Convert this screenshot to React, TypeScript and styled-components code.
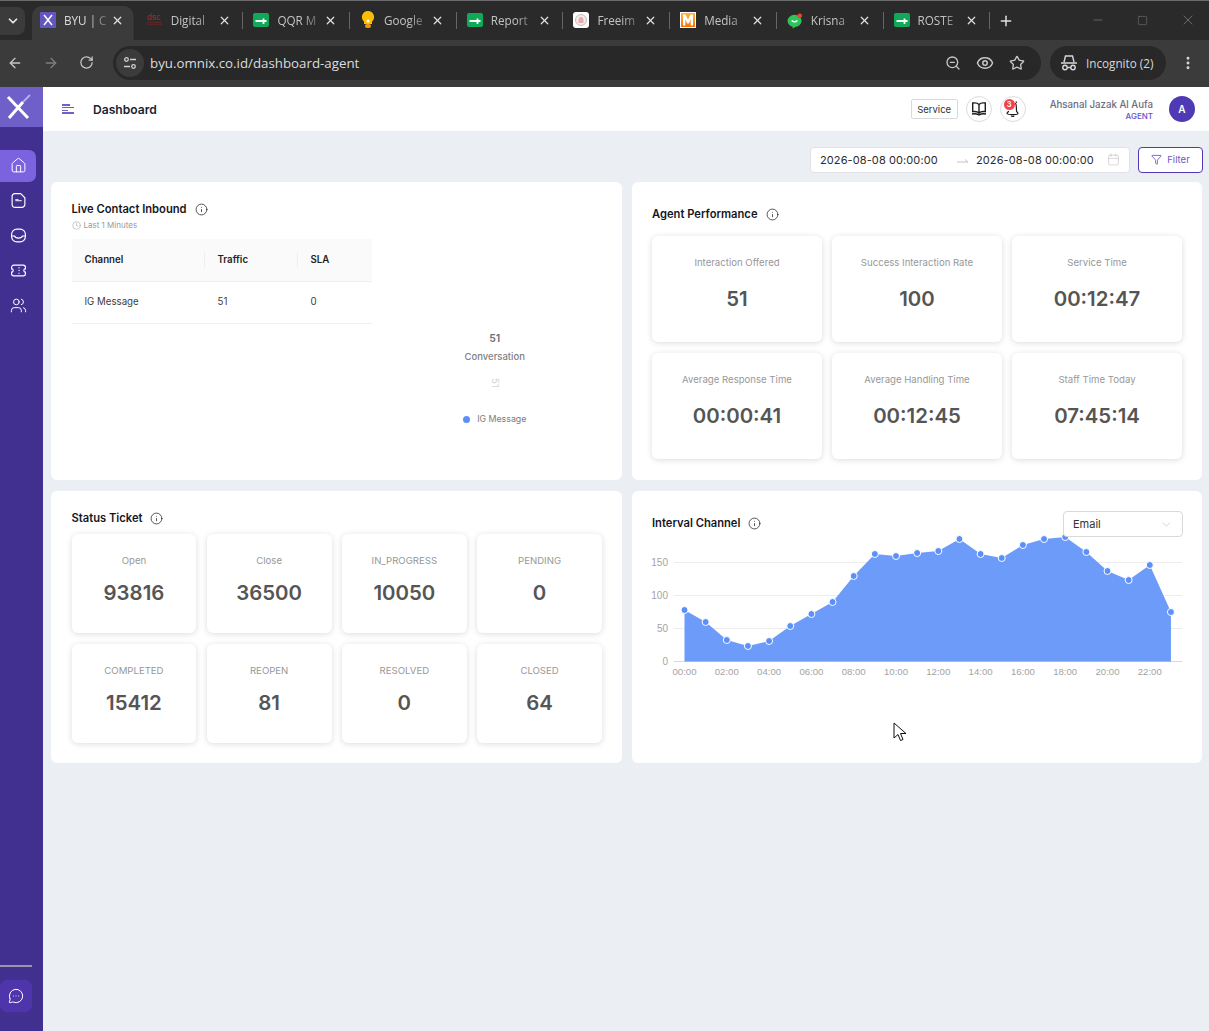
import React from "react";
import styled, { createGlobalStyle } from "styled-components";
import {
  ArrowLeft,
  ArrowRight,
  Calendar,
  ChevronDown,
  Clock,
  EllipsisVertical,
  Eye,
  Funnel,
  House,
  Info,
  MessageCircleMore,
  Minus,
  Plus,
  RotateCw,
  Square,
  Star,
  Users,
  X,
  ZoomOut,
} from "lucide-react";

const GlobalStyle = createGlobalStyle`
  html, body {
    margin: 0;
    padding: 0;
    height: 1031px;
    overflow: hidden;
    background: #ebeef3;
    font-family: "Inter", "Liberation Sans", sans-serif;
  }
  * { box-sizing: border-box; }
`;

const Page = styled.div`
  display: flex;
  flex-direction: column;
  width: 1209px;
  height: 1031px;
`;

/* browser chrome */
const TabStrip = styled.div`
  display: flex;
  align-items: flex-end;
  height: 40px;
  background: #2a2a2a;
  border-top: 1px solid #6b6b6b;
  color: #c9c9c9;
  font-family: "Open Sans", "Noto Sans", sans-serif;
  font-size: 11.7px;
`;

const TabListButton = styled.div`
  display: flex;
  align-items: center;
  justify-content: center;
  width: 25px;
  height: 28px;
  margin: 0 5px 5px 0;
  background: #3b3b3b;
  border-radius: 0 8px 8px 0;
  color: #e8e8e8;
`;

const Tab = styled.div<{ $active?: boolean }>`
  display: flex;
  align-items: center;
  width: 106.7px;
  height: 34px;
  padding: 0 0 6px 10px;
  position: relative;
  color: ${(p) => (p.$active ? "#dedede" : "#c4c4c4")};
  background: ${(p) => (p.$active ? "#3b3b3b" : "transparent")};
  border-radius: 10px 10px 0 0;
  clip-path: ${(p) => (p.$active ? "inset(0 3px 0 2px round 10px 10px 0 0)" : "none")};

  &::after {
    content: "";
    display: ${(p) => (p.$active ? "none" : "block")};
    position: absolute;
    right: 0;
    top: 6px;
    height: 17px;
    width: 1px;
    background: #666;
  }
`;

const TabIconSlot = styled.div`
  display: flex;
  align-items: center;
  justify-content: center;
  width: 16px;
  height: 16px;
  margin-right: 8px;
  flex: none;
`;

const TabTitle = styled.div`
  width: 45px;
  white-space: nowrap;
  flex: none;
  -webkit-mask-image: linear-gradient(90deg, #000 55%, rgba(0, 0, 0, 0.15) 100%);
  mask-image: linear-gradient(90deg, #000 55%, rgba(0, 0, 0, 0.15) 100%);
`;

const TabClose = styled.div`
  display: flex;
  margin-left: 2px;
  color: #e0e0e0;
`;

const NewTab = styled.div`
  display: flex;
  align-items: center;
  margin: 0 0 5px 8px;
  height: 28px;
  color: #e0e0e0;
`;

const WindowControls = styled.div`
  display: flex;
  align-items: center;
  gap: 32px;
  margin-left: auto;
  height: 38px;
  padding: 0 13px 0 0;
  margin-bottom: 1px;
  color: #8a8a8a;
`;

const Toolbar = styled.div`
  display: flex;
  align-items: center;
  height: 47px;
  background: #3b3b3b;
  padding: 0 13px 1px 7px;
  color: #c7c7c7;
`;

const NavButtons = styled.div`
  display: flex;
  gap: 20px;
  width: 106px;
`;

const NavButton = styled.div<{ $muted?: boolean }>`
  display: flex;
  color: ${(p) => (p.$muted ? "#7d7d7d" : "#c7c7c7")};
`;

const AddressPill = styled.div`
  display: flex;
  align-items: center;
  width: 928px;
  height: 34px;
  background: #282828;
  border-radius: 17px;
  padding: 0 16px 0 3px;
`;

const SiteInfo = styled.div`
  display: flex;
  align-items: center;
  justify-content: center;
  width: 28px;
  height: 28px;
  border-radius: 50%;
  background: #3b3b3b;
  margin-right: 6px;
  color: #d0d0d0;
`;

const Url = styled.div`
  font-family: "Open Sans", "Noto Sans", sans-serif;
  font-size: 13.3px;
  color: #dcdcdc;
`;

const AddressActions = styled.div`
  display: flex;
  align-items: center;
  gap: 15px;
  margin-left: auto;
`;

const IncognitoPill = styled.div`
  display: flex;
  align-items: center;
  gap: 8px;
  margin-left: 9px;
  width: 116px;
  height: 34px;
  padding-left: 10px;
  background: #282828;
  border-radius: 17px;
  color: #d8d8d8;
  font-family: "Open Sans", "Noto Sans", sans-serif;
  font-size: 11.7px;
`;

const MoreButton = styled.div`
  display: flex;
  margin-left: auto;
  color: #d8d8d8;
`;

/* app shell */
const AppBody = styled.div`
  display: flex;
  flex: 1;
  min-height: 0;
`;

const Sidebar = styled.aside`
  display: flex;
  flex-direction: column;
  width: 43px;
  flex: none;
  background: #41308f;
`;

const LogoBox = styled.div`
  display: flex;
  align-items: center;
  height: 40px;
  padding-left: 6px;
  background: #6f5fc8;
`;

const SideNav = styled.nav`
  display: flex;
  flex-direction: column;
  gap: 3px;
  margin-top: 23px;
`;

const SideItem = styled.div<{ $active?: boolean }>`
  display: flex;
  align-items: center;
  justify-content: center;
  width: 36px;
  height: 32px;
  padding-bottom: 1px;
  color: #fff;
  background: ${(p) => (p.$active ? "#7b63e0" : "transparent")};
  border-radius: 0 7px 7px 0;
`;

const SideFooter = styled.div`
  margin-top: auto;
  padding-bottom: 19px;
`;

const SideRule = styled.div`
  width: 32px;
  height: 2px;
  background: #9a96a8;
  margin-bottom: 13px;
`;

const ChatButton = styled.div`
  display: flex;
  align-items: center;
  justify-content: center;
  width: 32px;
  height: 32px;
  background: #4f35ab;
  border-radius: 7px;
  color: #fff;
`;

const Content = styled.div`
  flex: 1;
  min-width: 0;
`;

const Header = styled.header`
  display: flex;
  align-items: center;
  height: 44px;
  background: #fff;
  padding: 0 14px 0 19px;
`;

const MenuIcon = styled.div`
  display: flex;
  flex-direction: column;
  gap: 1.5px;
  width: 12px;
  margin-right: 19px;
`;

const MenuLine = styled.span<{ $w: number }>`
  display: block;
  height: 1.2px;
  width: ${(p) => p.$w}px;
  background: #6f5fc8;
`;

const PageTitle = styled.h1`
  margin: 0;
  font-size: 12.1px;
  font-weight: 600;
  color: #1e2230;
`;

const HeaderRight = styled.div`
  display: flex;
  align-items: center;
  margin-left: auto;
`;

const ServiceTag = styled.div`
  display: flex;
  align-items: center;
  justify-content: center;
  width: 47px;
  height: 20px;
  border: 1px solid #d9d9d9;
  border-radius: 2px;
  font-size: 9.5px;
  color: #333;
  margin-right: 8px;
`;

const CircleButton = styled.div`
  display: flex;
  align-items: center;
  justify-content: center;
  position: relative;
  width: 26px;
  height: 26px;
  border: 1px solid #dcdcdc;
  border-radius: 50%;
  margin-right: 8px;
  color: #222;
`;

const BellBadge = styled.span`
  position: absolute;
  top: 2px;
  left: 3px;
  width: 11px;
  height: 11px;
  border-radius: 50%;
  background: #f5414f;
  color: #fff;
  font-size: 7.5px;
  font-weight: 600;
  line-height: 11px;
  text-align: center;
`;

const UserInfo = styled.div`
  display: flex;
  flex-direction: column;
  align-items: flex-end;
  margin: 1px 16px 0 16px;
`;

const UserName = styled.div`
  font-size: 9.7px;
  font-weight: 500;
  line-height: 12px;
  color: #6d6b80;
`;

const UserRole = styled.div`
  font-size: 8px;
  font-weight: 500;
  line-height: 10px;
  color: #6a50c8;
`;

const Avatar = styled.div`
  display: flex;
  align-items: center;
  justify-content: center;
  width: 26px;
  height: 26px;
  border-radius: 50%;
  background: #4f39b5;
  color: #fff;
  font-size: 10px;
  font-weight: 600;
`;

const Main = styled.main`
  padding: 16px 6px 0 8px;
`;

const FilterRow = styled.div`
  display: flex;
  justify-content: flex-end;
  gap: 8px;
  margin-bottom: 9px;
`;

const DateRange = styled.div`
  display: flex;
  align-items: center;
  width: 320px;
  height: 26px;
  padding: 0 9px 1px;
  background: #fff;
  border: 1px solid #e0e2e7;
  border-radius: 4px;
  font-size: 11px;
  color: #2b2b2b;
  letter-spacing: 0.1px;
`;

const DateValue = styled.span`
  width: 137px;
`;

const DateArrow = styled.span`
  display: flex;
  width: 19px;
  color: #c6c6c6;
`;

const DateIcon = styled.span`
  display: flex;
  margin-left: auto;
  color: #c4c4c4;
`;

const FilterButton = styled.button`
  display: flex;
  align-items: center;
  justify-content: center;
  gap: 5px;
  width: 65px;
  height: 26px;
  padding: 0 0 1px;
  background: #fff;
  border: 1px solid #4f39b5;
  border-radius: 4px;
  color: #6a58c4;
  font-family: inherit;
  font-size: 9.5px;
`;

const CardGrid = styled.div`
  display: grid;
  grid-template-columns: 571px 570px;
  grid-template-rows: 298px 272px;
  gap: 11px 10px;
`;

const Card = styled.section<{ $pl?: number }>`
  position: relative;
  background: #fff;
  border-radius: 6px;
  padding: 20px 20px 20px ${(p) => p.$pl ?? 20}px;
`;

const TitleRow = styled.div<{ $mb?: number; $mt?: number }>`
  display: flex;
  align-items: center;
  gap: 8px;
  height: 14px;
  margin-top: ${(p) => p.$mt ?? 0}px;
  margin-bottom: ${(p) => p.$mb ?? 0}px;
  color: #222;
`;

const CardTitle = styled.h2`
  margin: 0;
  font-size: 11.2px;
  font-weight: 600;
  color: #15171f;
`;

const Subtitle = styled.div`
  display: flex;
  align-items: center;
  gap: 3px;
  height: 14px;
  margin: 2px 0 0;
  font-size: 8px;
  color: #9a9a9a;
`;

const LiveLayout = styled.div`
  display: flex;
`;

const TableColumn = styled.div`
  width: 300px;
  flex: none;
`;

const ChannelTable = styled.table`
  width: 300px;
  margin-top: 7px;
  border-collapse: collapse;
  table-layout: fixed;
  font-size: 9.7px;
`;

const HeadCell = styled.th<{ $w: number }>`
  position: relative;
  width: ${(p) => p.$w}px;
  height: 42px;
  padding: 0 0 1px 13px;
  background: #fafafa;
  border-bottom: 1px solid #efefef;
  font-weight: 600;
  text-align: left;
  color: #1f1f1f;

  &:not(:last-child)::after {
    content: "";
    position: absolute;
    right: 0;
    top: 13px;
    height: 16px;
    width: 1px;
    background: #eeeeee;
  }
`;

const BodyCell = styled.td`
  height: 42px;
  padding: 0 0 1px 13px;
  border-bottom: 1px solid #efefef;
  color: #3d3d3d;
`;

const DonutPanel = styled.div`
  flex: 1;
  display: flex;
  flex-direction: column;
  align-items: center;
  padding: 130px 0 0 16px;
  color: #7b7b7b;
`;

const DonutValue = styled.div`
  font-size: 10.5px;
  font-weight: 600;
  line-height: 14px;
  color: #6f6f6f;
`;

const DonutLabel = styled.div`
  margin-top: 4px;
  font-size: 9.5px;
  font-weight: 500;
  line-height: 14px;
  color: #7f7f7f;
`;

const DonutGhost = styled.div`
  writing-mode: vertical-rl;
  margin-top: 14px;
  height: 12px;
  font-size: 9.5px;
  line-height: 10px;
  color: #d4d4d4;
`;

const Legend = styled.div`
  display: flex;
  align-items: center;
  gap: 7px;
  margin: 22px 0 0 0;
  font-size: 8.8px;
  line-height: 14px;
  color: #7b7b7b;
`;

const LegendDot = styled.span`
  width: 7px;
  height: 7px;
  border-radius: 50%;
  background: #5b8ff9;
`;

const StatGrid = styled.div<{ $cols: number; $gapX: number; $gapY: number }>`
  display: grid;
  grid-template-columns: repeat(${(p) => p.$cols}, 1fr);
  gap: ${(p) => p.$gapY}px ${(p) => p.$gapX}px;
`;

const StatCard = styled.div<{ $h: number; $top: number }>`
  display: flex;
  flex-direction: column;
  align-items: center;
  height: ${(p) => p.$h}px;
  padding-top: ${(p) => p.$top}px;
  background: #fff;
  border-radius: 6px;
  box-shadow: 0 1px 6px rgba(0, 0, 0, 0.14);
`;

const StatLabel = styled.div`
  font-size: 9.6px;
  line-height: 12px;
  color: #989898;
`;

const StatValue = styled.div<{ $mt: number }>`
  margin-top: ${(p) => p.$mt}px;
  font-size: 20.4px;
  font-weight: 600;
  line-height: 26px;
  color: #555;
`;

const ChartHeader = styled.div`
  display: flex;
  align-items: center;
  justify-content: space-between;
  height: 26px;
  position: relative;
  z-index: 1;
`;

const ChannelSelect = styled.div`
  display: flex;
  align-items: center;
  justify-content: space-between;
  width: 120px;
  height: 26px;
  margin-right: -1px;
  padding: 0 9px;
  background: #fff;
  border: 1px solid #d9d9d9;
  border-radius: 4px;
  font-size: 11px;
  color: #333;
`;

const SelectCaret = styled.span`
  display: flex;
  color: #bfbfbf;
`;

const ChartSvg = styled.svg`
  display: block;
  overflow: visible;
`;

const AxisText = styled.text<{ $size: number }>`
  font-family: "Liberation Sans", sans-serif;
  font-size: ${(p) => p.$size}px;
  fill: #a3a3a3;
`;

const Pointer = styled.svg`
  position: absolute;
  left: 261px;
  top: 231px;
`;

/* tab favicons */
const SheetIcon = () => (
  <svg width="16" height="14" viewBox="0 0 16 14">
    <rect width="16" height="14" rx="2" fill="#0fa958" />
    <path d="M2.500 8h11M10.500 5.500v5.500" stroke="#fff" strokeWidth="1.800" fill="none" />
  </svg>
);

const OmnixMark = () => (
  <svg width="25" height="26" viewBox="0 0 25 26" fill="none">
    <path d="M2 3 L22 24" stroke="#fff" strokeWidth="3" />
    <path d="M3 24 L17 8" stroke="#fff" strokeWidth="3" />
    <path d="M17 8 L24 1" stroke="#b9b1e6" strokeWidth="1.800" />
  </svg>
);

const TabFavicon = ({ kind }: { kind: string }) => {
  if (kind === "omnix")
    return (
      <svg width="16" height="16" viewBox="0 0 16 16">
        <rect width="16" height="16" fill="#6257c0" />
        <path d="M4 3l8 10M12 3l-8 10" stroke="#fff" strokeWidth="1.500" />
      </svg>
    );
  if (kind === "dsc")
    return (
      <svg width="17" height="14" viewBox="0 0 17 14">
        <text x="0" y="7.500" fontSize="9" fontFamily="Liberation Sans" fill="#a32a2a">dsc</text>
        <path d="M0 9.500h16M0 11.500h16" stroke="#7d2424" strokeWidth="0.800" />
      </svg>
    );
  if (kind === "sheet") return <SheetIcon />;
  if (kind === "bulb")
    return (
      <svg width="14" height="18" viewBox="0 0 14 18">
        <path d="M7 0a6 6 0 0 1 4 10.500V13H3v-2.500A6 6 0 0 1 7 0z" fill="#fbbc04" />
        <circle cx="7" cy="10" r="1.600" fill="#fff" />
        <rect x="4" y="13" width="6" height="4" rx="2" fill="#f29900" />
      </svg>
    );
  if (kind === "freeim")
    return (
      <svg width="16" height="16" viewBox="0 0 16 16">
        <rect width="16" height="16" rx="3" fill="#fff" />
        <circle cx="8" cy="8" r="5.500" fill="#f4eded" stroke="#bdb4b4" strokeWidth="0.900" />
        <path d="M5.500 11V7l1.500-2h2l1.500 2v4z" fill="#eeaaaa" />
      </svg>
    );
  if (kind === "media")
    return (
      <svg width="16" height="16" viewBox="0 0 16 16">
        <defs>
          <linearGradient id="mediaFill" x1="0" y1="0" x2="0" y2="1">
            <stop offset="0" stopColor="#fbb73a" />
            <stop offset="1" stopColor="#f2700f" />
          </linearGradient>
        </defs>
        <rect width="16" height="16" fill="#fff" />
        <rect x="1" y="1" width="14" height="14" fill="url(#mediaFill)" />
        <path d="M3 13.500V2.500h2.500L8 7.500l2.500-5H13v11h-2.300V7.500L8.800 11.500H7.200L5.300 7.500v6z" fill="#fff" />
      </svg>
    );
  return (
    <svg width="17" height="17" viewBox="0 0 17 17">
      <ellipse cx="8" cy="9" rx="7.500" ry="6.500" fill="#2fc25b" />
      <path d="M6 14v3l4-2.500z" fill="#2fc25b" />
      <path d="M5 8.500c1.500 1.800 4.500 1.800 6 0" stroke="#fff" strokeWidth="1.500" fill="none" />
      <circle cx="13.500" cy="3.500" r="2.500" fill="#ea4335" />
    </svg>
  );
};

const IncognitoIcon = () => (
  <svg width="18" height="16" viewBox="0 0 18 16" fill="none" stroke="#d8d8d8" strokeWidth="1.400">
    <path d="M1 8h16M4 7l1.500-6h7L14 7" />
    <circle cx="5" cy="12.500" r="2.200" />
    <circle cx="13" cy="12.500" r="2.200" />
    <path d="M7.200 12.500h3.600" />
  </svg>
);

const TuneIcon = () => (
  <svg width="14" height="14" viewBox="0 0 14 14" fill="none" stroke="currentColor" strokeWidth="1.300">
    <circle cx="3.500" cy="3.500" r="1.800" />
    <path d="M7 3.500h6M1 10.500h6" />
    <circle cx="10.500" cy="10.500" r="1.800" />
  </svg>
);

/* sidebar glyphs */
const NavSvg = ({ children }: { children: React.ReactNode }) => (
  <svg width="17" height="17" viewBox="0 0 16 16" fill="none" stroke="currentColor" strokeWidth="1.100">
    {children}
  </svg>
);

const DocIcon = () => (
  <NavSvg>
    <path d="M4.500 1.500h5.500l4 4v6a3 3 0 0 1-3 3H5a3 3 0 0 1-3-3V4a2.500 2.500 0 0 1 2.500-2.500z" />
    <path d="M5 6.500h2.500l1 1h2.500v1.300H5z" fill="currentColor" stroke="none" opacity="0.8" />
  </NavSvg>
);

const TrayIcon = () => (
  <NavSvg>
    <rect x="1.500" y="2" width="13" height="12" rx="5" />
    <path d="M1.500 8.500h2.700c1 2.600 6.600 2.600 7.600 0h2.700" />
  </NavSvg>
);

const TicketIcon = () => (
  <NavSvg>
    <path d="M3.500 3h9a2 2 0 0 1 2 2v1.500a1.500 1.500 0 0 0 0 3V11a2 2 0 0 1-2 2h-9a2 2 0 0 1-2-2V9.500a1.500 1.500 0 0 0 0-3V5a2 2 0 0 1 2-2z" />
    <path d="M8.500 5v1M8.500 7.500v1M8.500 10v1" />
  </NavSvg>
);

const BookIcon = () => (
  <svg width="16" height="16" viewBox="0 0 16 16" fill="none" stroke="#1d1d1d" strokeWidth="1.400">
    <path d="M1.700 2c2.500-.4 5 0 6.300 1.500V12c-1.300-1.300-3.800-1.800-6.300-1.400zM14.300 2c-2.500-.4-5 0-6.300 1.500V12c1.300-1.300 3.800-1.800 6.300-1.400z" />
    <path d="M1 13c2.700-.5 5.300 0 7 1 1.700-1 4.300-1.500 7-1" />
  </svg>
);

const BellIcon = () => (
  <svg width="17" height="18" viewBox="0 0 17 18" fill="none" stroke="#1d1d1d" strokeWidth="1.200">
    <path d="M11.500 3c1.300 2 .8 6 1 8 .1 1 1.500 1.500 1.500 2.500 0 1.500-10 1.500-11 0 0-.7 1.300-1.200 1.700-2.500" />
    <path d="M7 15.800c1 .8 2.300.8 3.200 0" />
    <path d="M12 1.500l.6 1.200" />
  </svg>
);

// visible part of each tab title, the strip is too narrow for the rest
const tabs = [
  { kind: "omnix", title: "BYU | C", active: true },
  { kind: "dsc", title: "Digital" },
  { kind: "sheet", title: "QQR M" },
  { kind: "bulb", title: "Google" },
  { kind: "sheet", title: "Report" },
  { kind: "freeim", title: "Freeim" },
  { kind: "media", title: "Media" },
  { kind: "chat", title: "Krisna" },
  { kind: "sheet", title: "ROSTE" },
];

const agentStats = [
  { label: "Interaction Offered", value: "51" },
  { label: "Success Interaction Rate", value: "100" },
  { label: "Service Time", value: "00:12:47" },
  { label: "Average Response Time", value: "00:00:41" },
  { label: "Average Handling Time", value: "00:12:45" },
  { label: "Staff Time Today", value: "07:45:14" },
];

const ticketStats = [
  { label: "Open", value: "93816" },
  { label: "Close", value: "36500" },
  { label: "IN_PROGRESS", value: "10050" },
  { label: "PENDING", value: "0" },
  { label: "COMPLETED", value: "15412" },
  { label: "REOPEN", value: "81" },
  { label: "RESOLVED", value: "0" },
  { label: "CLOSED", value: "64" },
];

// y position of each hourly point, already in chart pixels
const intervalY = [
  73, 85, 103, 109, 104, 89, 77, 65, 39, 17, 19, 16, 14, 2, 17, 21, 8, 2, 0, 15, 34, 43, 28, 75,
];
const chartX = (hour: number) => 32.5 + hour * 21.15;
const chartBase = 124.5;

const IntervalChart = () => {
  const line = intervalY.map((y, i) => `${chartX(i)},${y}`).join(" ");
  const area = `${chartX(0)},${chartBase} ${line} ${chartX(23)},${chartBase}`;
  return (
    <ChartSvg width="531" height="145" viewBox="0 0 531 145">
      {[{ v: "150", y: 25.5 }, { v: "100", y: 58.5 }, { v: "50", y: 91.5 }, { v: "0", y: chartBase }].map((t) => (
        <g key={t.v}>
          <line
            x1="22"
            x2="530"
            y1={t.y}
            y2={t.y}
            stroke={t.v === "0" ? "#d9d9d9" : "#ececec"}
          />
          <AxisText $size={10} x="16" y={t.y + 3.5} textAnchor="end">
            {t.v}
          </AxisText>
        </g>
      ))}
      <polygon points={area} fill="#6c9bf9" />
      {intervalY.map((y, i) => (
        <circle key={i} cx={chartX(i)} cy={y} r="3.500" fill="#5b8ff9" stroke="#fff" strokeWidth="1" />
      ))}
      {intervalY.map((_, i) =>
        i % 2 === 0 ? (
          <AxisText $size={9.6} key={i} x={chartX(i)} y={138} textAnchor="middle">
            {String(i).padStart(2, "0")}:00
          </AxisText>
        ) : null
      )}
    </ChartSvg>
  );
};

const StatBlock = ({ label, value, h, top, mt }: { label: string; value: string; h: number; top: number; mt: number }) => (
  <StatCard $h={h} $top={top}>
    <StatLabel>{label}</StatLabel>
    <StatValue $mt={mt}>{value}</StatValue>
  </StatCard>
);

export default function App() {
  return (
    <Page>
      <GlobalStyle />
      <TabStrip>
        <TabListButton>
          <ChevronDown size={14} strokeWidth={3} />
        </TabListButton>
        {tabs.map((t, i) => (
          <Tab key={i} $active={t.active}>
            <TabIconSlot>
              <TabFavicon kind={t.kind} />
            </TabIconSlot>
            <TabTitle>{t.title}</TabTitle>
            <TabClose>
              <X size={13} strokeWidth={2.2} />
            </TabClose>
          </Tab>
        ))}
        <NewTab>
          <Plus size={16} strokeWidth={2.2} />
        </NewTab>
        <WindowControls>
          <Minus size={14} strokeWidth={1} />
          <Square size={11} strokeWidth={1} />
          <X size={16} strokeWidth={1} />
        </WindowControls>
      </TabStrip>
      <Toolbar>
        <NavButtons>
          <NavButton>
            <ArrowLeft size={16} />
          </NavButton>
          <NavButton $muted>
            <ArrowRight size={16} />
          </NavButton>
          <NavButton>
            <RotateCw size={15} />
          </NavButton>
        </NavButtons>
        <AddressPill>
          <SiteInfo>
            <TuneIcon />
          </SiteInfo>
          <Url>byu.omnix.co.id/dashboard-agent</Url>
          <AddressActions>
            <ZoomOut size={16} />
            <Eye size={18} />
            <Star size={16} />
          </AddressActions>
        </AddressPill>
        <IncognitoPill>
          <IncognitoIcon />
          Incognito (2)
        </IncognitoPill>
        <MoreButton>
          <EllipsisVertical size={16} strokeWidth={2.4} />
        </MoreButton>
      </Toolbar>
      <AppBody>
        <Sidebar>
          <LogoBox>
            <OmnixMark />
          </LogoBox>
          <SideNav>
            <SideItem $active>
              <House size={17} strokeWidth={1.4} />
            </SideItem>
            <SideItem>
              <DocIcon />
            </SideItem>
            <SideItem>
              <TrayIcon />
            </SideItem>
            <SideItem>
              <TicketIcon />
            </SideItem>
            <SideItem>
              <Users size={17} strokeWidth={1.4} />
            </SideItem>
          </SideNav>
          <SideFooter>
            <SideRule />
            <ChatButton>
              <MessageCircleMore size={16} strokeWidth={1.5} />
            </ChatButton>
          </SideFooter>
        </Sidebar>
        <Content>
          <Header>
            <MenuIcon>
              <MenuLine $w={8} />
              <MenuLine $w={12} />
              <MenuLine $w={6} />
              <MenuLine $w={12} />
            </MenuIcon>
            <PageTitle>Dashboard</PageTitle>
            <HeaderRight>
              <ServiceTag>Service</ServiceTag>
              <CircleButton>
                <BookIcon />
              </CircleButton>
              <CircleButton>
                <BellIcon />
                <BellBadge>3</BellBadge>
              </CircleButton>
              <UserInfo>
                <UserName>Ahsanal Jazak Al Aufa</UserName>
                <UserRole>AGENT</UserRole>
              </UserInfo>
              <Avatar>A</Avatar>
            </HeaderRight>
          </Header>
          <Main>
            <FilterRow>
              <DateRange>
                <DateValue>2026-08-08 00:00:00</DateValue>
                <DateArrow>
                  <svg width="13" height="8" viewBox="0 0 13 8" fill="none" stroke="currentColor">
                    <path d="M0 6h11M8 3.500L11 6" />
                  </svg>
                </DateArrow>
                <span>2026-08-08 00:00:00</span>
                <DateIcon>
                  <Calendar size={13} strokeWidth={1.2} />
                </DateIcon>
              </DateRange>
              <FilterButton>
                <Funnel size={11} strokeWidth={1.6} color="#4f39b5" />
                Filter
              </FilterButton>
            </FilterRow>
            <CardGrid>
              <Card $pl={20.5}>
                <LiveLayout>
                  <TableColumn>
                    <TitleRow>
                      <CardTitle>Live Contact Inbound</CardTitle>
                      <Info size={13} strokeWidth={1.4} />
                    </TitleRow>
                    <Subtitle>
                      <Clock size={9} strokeWidth={1.4} />
                      Last 1 Minutes
                    </Subtitle>
                    <ChannelTable>
                      <thead>
                        <tr>
                          <HeadCell $w={133}>Channel</HeadCell>
                          <HeadCell $w={93}>Traffic</HeadCell>
                          <HeadCell $w={74}>SLA</HeadCell>
                        </tr>
                      </thead>
                      <tbody>
                        <tr>
                          <BodyCell>IG Message</BodyCell>
                          <BodyCell>51</BodyCell>
                          <BodyCell>0</BodyCell>
                        </tr>
                      </tbody>
                    </ChannelTable>
                  </TableColumn>
                  <DonutPanel>
                    <DonutValue>51</DonutValue>
                    <DonutLabel>Conversation</DonutLabel>
                    <DonutGhost>51</DonutGhost>
                    <Legend>
                      <LegendDot />
                      IG Message
                    </Legend>
                  </DonutPanel>
                </LiveLayout>
              </Card>
              <Card>
                <TitleRow $mt={5} $mb={15}>
                  <CardTitle>Agent Performance</CardTitle>
                  <Info size={13} strokeWidth={1.4} />
                </TitleRow>
                <StatGrid $cols={3} $gapX={10} $gapY={11}>
                  {agentStats.map((s) => (
                    <StatBlock key={s.label} label={s.label} value={s.value} h={106} top={21} mt={17} />
                  ))}
                </StatGrid>
              </Card>
              <Card $pl={20.5}>
                <TitleRow $mb={8.5}>
                  <CardTitle>Status Ticket</CardTitle>
                  <Info size={13} strokeWidth={1.4} />
                </TitleRow>
                <StatGrid $cols={4} $gapX={10.3} $gapY={11}>
                  {ticketStats.map((s) => (
                    <StatBlock key={s.label} label={s.label} value={s.value} h={99} top={21} mt={13.5} />
                  ))}
                </StatGrid>
              </Card>
              <Card>
                <ChartHeader>
                  <TitleRow $mb={2}>
                    <CardTitle>Interval Channel</CardTitle>
                    <Info size={13} strokeWidth={1.4} />
                  </TitleRow>
                  <ChannelSelect>
                    Email
                    <SelectCaret>
                      <ChevronDown size={13} strokeWidth={1.2} />
                    </SelectCaret>
                  </ChannelSelect>
                </ChartHeader>
                <IntervalChart />
                <Pointer width="14" height="20" viewBox="0 0 14 20">
                  <path d="M1 1v15l4-3.500 2.500 6 2.500-1-2.500-6H13z" fill="#fff" stroke="#111" strokeWidth="1" />
                </Pointer>
              </Card>
            </CardGrid>
          </Main>
        </Content>
      </AppBody>
    </Page>
  );
}
